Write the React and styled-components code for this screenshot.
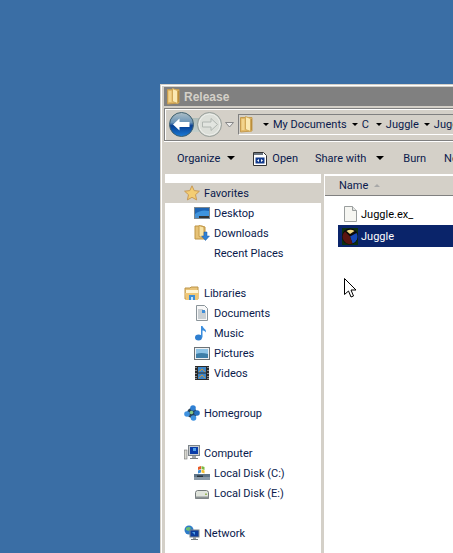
import React from 'react'
import styled, { createGlobalStyle } from 'styled-components'

const Global = createGlobalStyle`
  html, body { margin: 0; padding: 0; height: 100%; overflow: hidden; }
  body { background: #3a6ea5; font-family: Roboto, "Noto Sans", sans-serif; }
  #root { height: 100%; }
`

const Desktop = styled.div`
  width: 453px;
  height: 553px;
  padding: 84px 0 0 160px;
  box-sizing: border-box;
  overflow: hidden;
`

const Window = styled.div`
  width: 420px;
  height: 469px;
  box-sizing: border-box;
  background: #d4d0c8;
  border-top: 1px solid #d4d0c8;
  border-left: 1px solid #d4d0c8;
  box-shadow: inset 1px 1px 0 #fff;
  padding: 2px 0 0 2px;
  display: flex;
  flex-direction: column;
`

const TitleBar = styled.div`
  height: 19px;
  margin-left: 1px;
  background: #808080;
  display: flex;
  align-items: center;
  gap: 4px;
  padding-left: 3px;
  flex: none;
  color: #d4d0c8;
  font: bold 12px "Liberation Sans", sans-serif;
`

const NavBar = styled.div`
  height: 33px;
  margin: 2px 0 0 1px;
  box-sizing: border-box;
  flex: none;
  border: 1px solid #808080;
  border-right: 0;
  box-shadow: inset 1px 1px 0 #fff, 0 1px 0 #fff;
  display: flex;
  align-items: center;
  padding-left: 4px;
`

const NavButtons = styled.div`
  display: flex;
  align-items: center;
  gap: 3px;
  width: 69px;
  flex: none;
  background: linear-gradient(#aebcb8, #c6d0cc) no-repeat 12px 50% / 26px 14px;
`

const Address = styled.div`
  flex: 1;
  height: 21px;
  box-sizing: border-box;
  background: #d4d0c8;
  border-top: 1px solid #808080;
  border-left: 1px solid #808080;
  border-bottom: 1px solid #fff;
  display: flex;
  align-items: center;
  white-space: nowrap;
  overflow: hidden;
  font-size: 11px;
  color: #0a1a4c;
`

const Crumb = styled.span`
  display: inline-flex;
  align-items: center;
  margin-left: ${p => p.$gap ?? 5}px;
  gap: 4px;
  flex: none;
`

const Arrow = styled.span`
  width: 0;
  height: 0;
  flex: none;
  border-left: ${p => p.$size || 3}px solid transparent;
  border-right: ${p => p.$size || 3}px solid transparent;
  border-top: ${p => p.$size || 3}px solid #000;
`

const Toolbar = styled.div`
  height: 30px;
  flex: none;
  display: flex;
  align-items: center;
  padding: 2px 0 1px 14px;
  font-size: 11px;
  color: #0a1a4c;
  white-space: nowrap;
`

const ToolItem = styled.span`
  display: inline-flex;
  align-items: center;
  gap: ${p => p.$gap || 7}px;
  margin-right: ${p => p.$right || 0}px;
  flex: none;
`

const Panes = styled.div`
  flex: 1;
  display: flex;
  margin-left: 2px;
  gap: 3px;
  min-height: 0;
`

const Sidebar = styled.div`
  width: 156px;
  flex: none;
  background: #fff;
  padding-top: 9px;
  font-size: 11px;
  color: #0a1a4c;
`

const Group = styled.div`
  margin-bottom: 20px;
`

const NavRow = styled.div`
  height: 20px;
  display: flex;
  align-items: center;
  padding-left: ${p => (p.$child ? 29 : 19)}px;
  gap: 4px;
  background: ${p => (p.$active ? '#d4d0c8' : 'transparent')};
  white-space: nowrap;
`

const IconSlot = styled.span`
  width: 16px;
  height: 16px;
  flex: none;
  display: block;
  & > svg { display: block; }
`

const Content = styled.div`
  flex: 1;
  background: #fff;
  display: flex;
  flex-direction: column;
  font-size: 11px;
  color: #0a1a4c;
  position: relative;
`

const HeaderRow = styled.div`
  height: 21px;
  flex: none;
  background: #d4d0c8;
  box-shadow: inset 1px 1px 0 #fff, inset 0 -1px 0 #808080;
  margin-top: 1px;
  display: flex;
  align-items: center;
  padding-left: 15px;
  gap: 6px;
`

const SortMark = styled.span`
  width: 0;
  height: 0;
  border-left: 3px solid transparent;
  border-right: 3px solid transparent;
  border-bottom: 3px solid #a8a8a8;
`

const Files = styled.div`
  padding: 7px 0 0 14px;
  display: flex;
  flex-direction: column;
`

const FileRow = styled.div`
  height: 22px;
  display: flex;
  align-items: center;
  padding-left: 3px;
  background: ${p => (p.$selected ? '#0a246a' : 'transparent')};
  color: ${p => (p.$selected ? '#fff' : '#000')};
  white-space: nowrap;
`

const FileIcon = styled.span`
  width: 20px;
  flex: none;
  display: flex;
  padding-left: ${p => p.$inset || 0}px;
  box-sizing: border-box;
`

const Cursor = styled.svg`
  position: absolute;
  left: 20px;
  top: 104px;
`

const Folder = () => (
  <svg width="13" height="17" viewBox="0 0 13 17">
    <path d="M.5 1.500h11.500v13.500L.5 16z" fill="#e2b765" stroke="#c59c50" />
    <path d="M5.500.5l5 2v13l-5-2z" fill="#fbe9b2" stroke="#d0a858" />
    <rect x="1.500" y="3" width="3" height="11" fill="#f2d48c" />
    <rect x="11" y="3" width="1" height="11" fill="#b98d3c" />
  </svg>
)

const BackButton = () => (
  <svg width="25" height="25" viewBox="0 0 25 25">
    <defs>
      <linearGradient id="backFill" x1="0" y1="0" x2="0" y2="1">
        <stop offset="0" stopColor="#aebfc6" />
        <stop offset="0.42" stopColor="#6a94b8" />
        <stop offset="0.55" stopColor="#073f92" />
        <stop offset="1" stopColor="#1a7ad6" />
      </linearGradient>
    </defs>
    <circle cx="12.500" cy="12.500" r="12" fill="url(#backFill)" stroke="#40606e" />
    <path d="M4 12.500l6.500-6v3.500h10v5h-10v3.500z" fill="#fff" />
  </svg>
)

const ForwardButton = () => (
  <svg width="25" height="25" viewBox="0 0 25 25">
    <circle cx="12.500" cy="12.500" r="12" fill="#d6d9d3" stroke="#979e99" />
    <circle cx="12.500" cy="12.500" r="10.500" fill="#dcdfd9" stroke="#eef0ec" />
    <path d="M20.500 12.500l-6.500-6v3.500H5.500v5H14v3.500z" fill="#e2e5e0" stroke="#b0b6b1" />
  </svg>
)

const Star = () => (
  <svg width="16" height="16" viewBox="0 0 16 16">
    <path d="M8 .8l2.200 4.800 5.200.6-3.900 3.500 1.100 5.200L8 12.300l-4.600 2.600 1.100-5.200L.6 6.200l5.200-.6z" fill="#f4cd72" stroke="#c89a55" />
  </svg>
)

const DesktopIcon = () => (
  <svg width="16" height="16" viewBox="0 0 16 16">
    <rect x="0.500" y="2.500" width="15" height="11" fill="#8d9ca6" stroke="#7c8790" />
    <rect x="1" y="3" width="14" height="8" fill="#1c64b4" />
    <path d="M1 9q6-5 14-3v5H1z" fill="#3f94de" />
    <rect x="1" y="11" width="14" height="2" fill="#333" />
    <rect x="1" y="11" width="4" height="2" fill="#4a90d0" />
  </svg>
)

const DownloadsIcon = () => (
  <svg width="16" height="16" viewBox="0 0 16 16">
    <path d="M1 1h7l3 1v12H1z" fill="#e6c276" stroke="#bd9444" />
    <path d="M5 .5l5 1.500v11l-5-1.500z" fill="#f7e3a6" stroke="#c89d4c" />
    <path d="M10 7h3v4h2.500l-4 4.500-4-4.500H10z" fill="#2f80d4" stroke="#1b5ca8" strokeWidth="0.500" />
  </svg>
)

const LibrariesIcon = () => (
  <svg width="16" height="16" viewBox="0 0 16 16">
    <path d="M1 3h5l1-1h7v12H1z" fill="#e9c47a" stroke="#bc9448" />
    <rect x="2" y="5" width="12" height="3" fill="#fff6d8" />
    <path d="M1 8h14l-1 7H2z" fill="#f0c878" />
    <path d="M5 15v-5h6v5z" fill="#3f8fd6" />
    <rect x="7" y="12" width="2" height="3" fill="#c8e4f8" />
  </svg>
)

const DocumentsIcon = () => (
  <svg width="16" height="16" viewBox="0 0 16 16">
    <path d="M2.500.5h8l3 3v12h-11z" fill="#f8f8f8" stroke="#8a949a" />
    <path d="M4 5h5M4 7h8M4 9h8M4 11h8M4 13h8" stroke="#9aa6ae" />
    <rect x="8" y="5" width="3" height="3" fill="#3f8ed8" />
  </svg>
)

const MusicIcon = () => (
  <svg width="16" height="16" viewBox="0 0 16 16">
    <ellipse cx="4.500" cy="12.500" rx="3.500" ry="3" fill="#2f7fd0" />
    <path d="M7 12.500V1h1.500c.5 2.500 4 3 3.500 6.500C11 6 9.500 5.500 8.500 5.500v7z" fill="#3b8ede" />
  </svg>
)

const PicturesIcon = () => (
  <svg width="16" height="16" viewBox="0 0 16 16">
    <rect x="0.500" y="2.500" width="15" height="12" fill="#eef0f2" stroke="#6c7276" />
    <rect x="2" y="4" width="12" height="9" fill="#8fc4e6" />
    <path d="M2 9q5-2 12 0v4H2z" fill="#3f7fa8" />
  </svg>
)

const VideosIcon = () => (
  <svg width="16" height="16" viewBox="0 0 16 16">
    <rect x="1" y="1" width="14" height="14" fill="#2a2a2a" />
    <rect x="4" y="2" width="8" height="5.500" fill="#3f88c8" />
    <rect x="4" y="8.500" width="8" height="5.500" fill="#3f88c8" />
    <path d="M5 7l3-3 3 3M5 13l3-3 3 3" stroke="#c89040" fill="none" />
    <path d="M2 2v1M2 5v1M2 8v1M2 11v1M2 13v1M14 2v1M14 5v1M14 8v1M14 11v1M14 13v1" stroke="#eee" />
  </svg>
)

const HomegroupIcon = () => (
  <svg width="16" height="16" viewBox="0 0 16 16">
    <circle cx="8" cy="8" r="5" fill="#26425c" />
    <circle cx="9" cy="3" r="2.800" fill="#2f80d4" />
    <circle cx="3" cy="9" r="2.800" fill="#3f92e0" />
    <circle cx="13" cy="8" r="2.800" fill="#2570c0" />
    <circle cx="9.500" cy="13" r="2.800" fill="#3f92e0" />
    <circle cx="7.500" cy="7.500" r="1.800" fill="#86c884" />
  </svg>
)

const ComputerIcon = () => (
  <svg width="16" height="16" viewBox="0 0 16 16">
    <rect x="0.500" y="5" width="2.500" height="9" fill="#d8d8d0" stroke="#777" strokeWidth="0.600" />
    <rect x="4.500" y="0.500" width="11" height="10" fill="#c8ccd0" stroke="#7c848a" />
    <rect x="6" y="2" width="8" height="7" fill="#0a3ca8" />
    <path d="M9 3h3v3H9z" fill="#4fa0e8" />
    <rect x="8" y="11" width="4" height="2" fill="#a0a4a8" />
    <rect x="6" y="13" width="8" height="1" fill="#787c80" />
  </svg>
)

const LocalDiskC = () => (
  <svg width="16" height="16" viewBox="0 0 16 16">
    <path d="M0 9h16v5H0z" fill="#5e7488" />
    <rect x="0" y="12" width="16" height="3" fill="#8a9aa8" />
    <rect x="3" y="10.500" width="6" height="1.500" fill="#26323c" />
    <path d="M4 2l3-1v3L4 5z" fill="#e85a28" />
    <path d="M7.500 1l3 1v3l-3-1z" fill="#7cb840" />
    <path d="M4 5.500l3-1v3l-3 1z" fill="#3f8ed8" />
    <path d="M7.500 4.500l3 1v3l-3-1z" fill="#f4c030" />
  </svg>
)

const LocalDiskE = () => (
  <svg width="16" height="16" viewBox="0 0 16 16">
    <path d="M1.500 7.500q.5-2 2-2h9q1.500 0 2 2v6h-13z" fill="#e0e4dc" stroke="#73797a" />
    <rect x="1.500" y="11.500" width="13" height="2" fill="#8c9294" />
    <rect x="11" y="8.500" width="2" height="1.500" fill="#9ab860" />
  </svg>
)

const NetworkIcon = () => (
  <svg width="16" height="16" viewBox="0 0 16 16">
    <circle cx="5" cy="5" r="4.500" fill="#2f7cc8" />
    <path d="M2 3q3-2 5 0l-2 3-3-1z" fill="#6cc070" />
    <rect x="6" y="5" width="9" height="7" fill="#0c3c9c" stroke="#7c848a" />
    <path d="M8 7h3v3z" fill="#4fa0e8" />
    <rect x="9" y="12" width="3" height="2" fill="#9aa0a4" />
    <rect x="7" y="14" width="7" height="1" fill="#747a7e" />
  </svg>
)

const OpenIcon = () => (
  <svg width="14" height="15" viewBox="0 0 14 15">
    <path d="M.5 1.500h10l3 3v10H.5z" fill="#fff" stroke="#333" />
    <rect x="1" y="2" width="9" height="2" fill="#6a7480" />
    <rect x="2.500" y="6.500" width="9" height="6" fill="#123a8c" />
    <path d="M4 9.500l2-1.500v3zM10 9.500L8 8v3z" fill="#fff" />
  </svg>
)

const BlankFile = () => (
  <svg width="13" height="16" viewBox="0 0 13 16">
    <path d="M.5.5h8l4 4v11H.5z" fill="#f6f6f2" stroke="#9a9e9e" />
    <path d="M8.500.5v4h4" fill="#e4e6e4" stroke="#9a9e9e" />
  </svg>
)

const JuggleIcon = () => (
  <svg width="16" height="17" viewBox="0 0 16 17">
    <rect width="16" height="17" fill="#0c3010" />
    <circle cx="8" cy="8.500" r="8" fill="#0a0a0a" />
    <path d="M8 8.500L14.500 5a7.200 7.200 0 0 1-4 10.500z" fill="#1448b8" />
    <path d="M8 8.500L3 3.500a7.200 7.200 0 0 0 7.500 12z" fill="#5a1410" />
    <path d="M4.500 3q4-2.500 8 0L8 6z" fill="#f0d880" />
  </svg>
)

const favorites = [
  { label: 'Desktop', icon: <DesktopIcon /> },
  { label: 'Downloads', icon: <DownloadsIcon /> },
  { label: 'Recent Places', icon: null },
]

const libraries = [
  { label: 'Documents', icon: <DocumentsIcon /> },
  { label: 'Music', icon: <MusicIcon /> },
  { label: 'Pictures', icon: <PicturesIcon /> },
  { label: 'Videos', icon: <VideosIcon /> },
]

const disks = [
  { label: 'Local Disk (C:)', icon: <LocalDiskC /> },
  { label: 'Local Disk (E:)', icon: <LocalDiskE /> },
]

const Children = ({ items }) =>
  items.map(item => (
    <NavRow $child key={item.label}>
      <IconSlot>{item.icon}</IconSlot>
      {item.label}
    </NavRow>
  ))

export default function App() {
  return (
    <Desktop>
      <Global />
      <Window>
        <TitleBar>
          <Folder />
          Release
        </TitleBar>
        <NavBar>
          <NavButtons>
            <BackButton />
            <ForwardButton />
            <svg width="9" height="6" viewBox="0 0 9 6"><path d="M.5.500h8L4.500 5z" fill="#eee" stroke="#888" /></svg>
          </NavButtons>
          <Address>
            <Crumb $gap={1}><Folder /></Crumb>
            <Crumb $gap={10}><Arrow /><span>My Documents</span></Crumb>
            <Crumb><Arrow /><span>C</span></Crumb>
            <Crumb $gap={7}><Arrow /><span>Juggle</span></Crumb>
            <Crumb><Arrow /><span>Juggle</span></Crumb>
          </Address>
        </NavBar>
        <Toolbar>
          <ToolItem $right={18}>Organize<Arrow $size={4} /></ToolItem>
          <ToolItem $gap={5} $right={17}><OpenIcon />Open</ToolItem>
          <ToolItem $gap={10} $right={19}>Share with<Arrow $size={4} /></ToolItem>
          <ToolItem $right={18}>Burn</ToolItem>
          <ToolItem>New folder</ToolItem>
        </Toolbar>
        <Panes>
          <Sidebar>
            <Group>
              <NavRow $active><IconSlot><Star /></IconSlot>Favorites</NavRow>
              <Children items={favorites} />
            </Group>
            <Group>
              <NavRow><IconSlot><LibrariesIcon /></IconSlot>Libraries</NavRow>
              <Children items={libraries} />
            </Group>
            <Group>
              <NavRow><IconSlot><HomegroupIcon /></IconSlot>Homegroup</NavRow>
            </Group>
            <Group>
              <NavRow><IconSlot><ComputerIcon /></IconSlot>Computer</NavRow>
              <Children items={disks} />
            </Group>
            <Group>
              <NavRow><IconSlot><NetworkIcon /></IconSlot>Network</NavRow>
            </Group>
          </Sidebar>
          <Content>
            <HeaderRow>Name<SortMark /></HeaderRow>
            <Files>
              <FileRow><FileIcon $inset={3}><BlankFile /></FileIcon>Juggle.ex_</FileRow>
              <FileRow $selected><FileIcon $inset={1}><JuggleIcon /></FileIcon>Juggle</FileRow>
            </Files>
            <Cursor width="13" height="21" viewBox="0 0 13 21">
              <path d="M.5.500v16l4-3.500 2.500 6 2.500-1-2.500-6h5z" fill="#fff" stroke="#000" />
            </Cursor>
          </Content>
        </Panes>
      </Window>
    </Desktop>
  )
}
